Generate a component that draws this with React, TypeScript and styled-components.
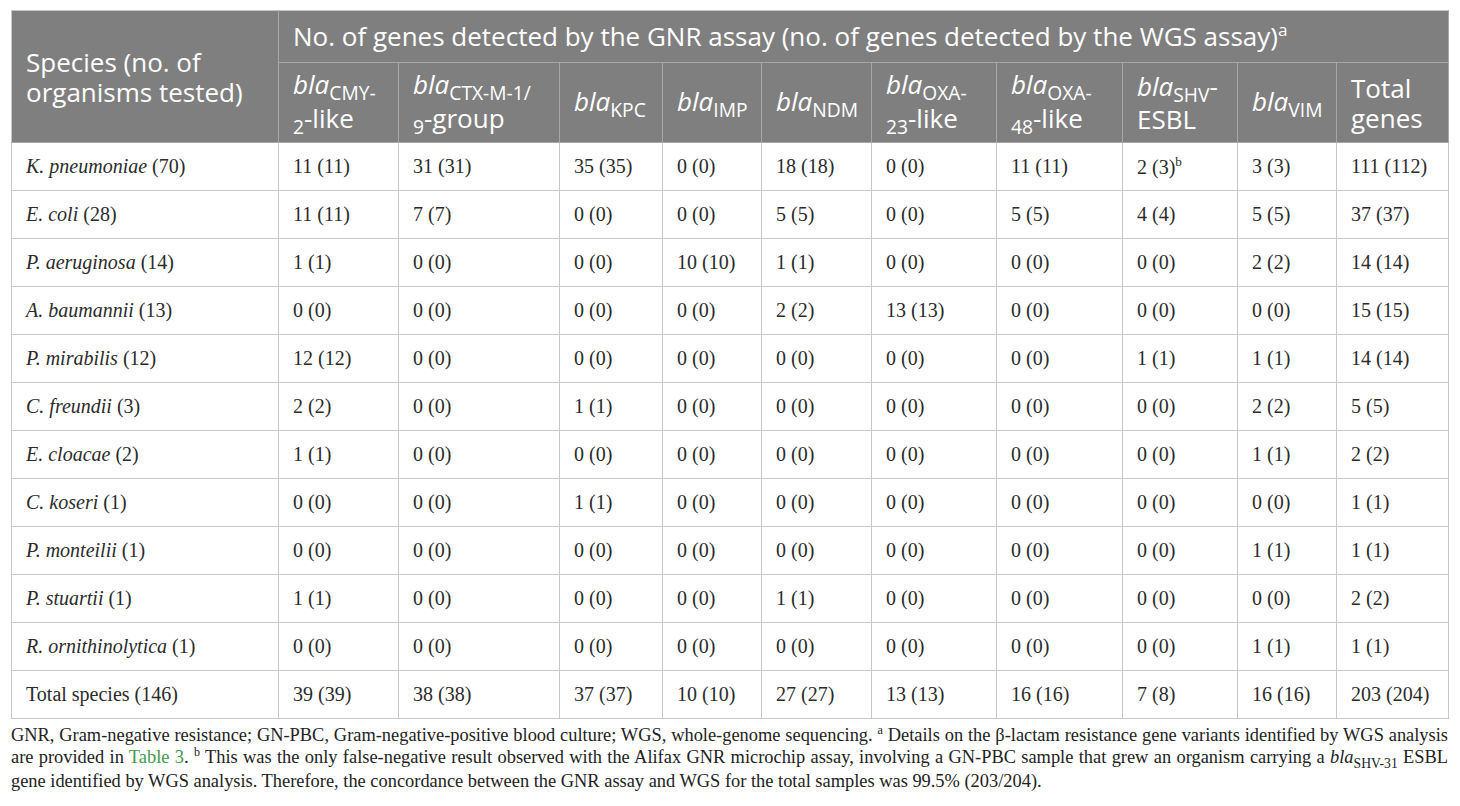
import { FC, ReactNode } from "react";
import styled, { createGlobalStyle } from "styled-components";

const GlobalStyle = createGlobalStyle`
  html, body {
    margin: 0;
    padding: 0;
    background: #ffffff;
  }
`;

const Page = styled.div`
  padding: 10px 12px 0 11px;
  width: 1437px;
`;

const Table = styled.table`
  width: 1437px;
  border-collapse: collapse;
  table-layout: fixed;
  border: 1px solid #c8c8c8;
`;

const HeadCell = styled.th<{ $first?: boolean }>`
  background: #7f7f7f;
  color: #ffffff;
  font-family: "Open Sans", "Noto Sans", sans-serif;
  font-weight: 400;
  font-size: 26px;
  line-height: 30px;
  text-align: left;
  vertical-align: middle;
  padding: 0 6px 0 14px;
  border: 1px solid #a8a8a8;
  border-top: none;
  white-space: nowrap;
  ${(p) => (p.$first ? "border-left: none;" : "")}
`;

const TopRow = styled.tr`
  height: 52px;
`;

const SubHeadRow = styled.tr`
  height: 80px;
`;

const BodyRow = styled.tr`
  height: 48px;
`;

const Cell = styled.td`
  font-family: "Liberation Serif", "Times New Roman", serif;
  font-size: 20px;
  color: #2b2b2b;
  padding: 0 8px 0 14px;
  border: 1px solid #c8c8c8;
  vertical-align: middle;
  white-space: nowrap;
`;

const Sub = styled.span`
  font-size: 0.74em;
  vertical-align: -0.32em;
  line-height: 1;
`;

const Sup = styled.sup`
  font-size: 0.66em;
  vertical-align: 0.6em;
  line-height: 1;
`;

const Note = styled.p`
  margin: 5px 0 0;
  font-family: "Liberation Serif", "Times New Roman", serif;
  font-size: 18.4px;
  line-height: 21px;
  color: #222222;
  text-align: justify;
`;

const Link = styled.span`
  color: #3f9a48;
`;

interface GeneProps {
  sub: ReactNode;
  tail?: ReactNode;
}

const Gene: FC<GeneProps> = ({ sub, tail }) => (
  <>
    <i>bla</i>
    <Sub>{sub}</Sub>
    {tail}
  </>
);

const colWidths = [267, 120, 161, 103, 99, 110, 125, 126, 115, 99, 112];

interface RowData {
  genus: string;
  count: number;
  values: ReactNode[];
}

const rows: RowData[] = [
  { genus: "K. pneumoniae", count: 70, values: ["11 (11)", "31 (31)", "35 (35)", "0 (0)", "18 (18)", "0 (0)", "11 (11)", <>2 (3)<Sup>b</Sup></>, "3 (3)", "111 (112)"] },
  { genus: "E. coli", count: 28, values: ["11 (11)", "7 (7)", "0 (0)", "0 (0)", "5 (5)", "0 (0)", "5 (5)", "4 (4)", "5 (5)", "37 (37)"] },
  { genus: "P. aeruginosa", count: 14, values: ["1 (1)", "0 (0)", "0 (0)", "10 (10)", "1 (1)", "0 (0)", "0 (0)", "0 (0)", "2 (2)", "14 (14)"] },
  { genus: "A. baumannii", count: 13, values: ["0 (0)", "0 (0)", "0 (0)", "0 (0)", "2 (2)", "13 (13)", "0 (0)", "0 (0)", "0 (0)", "15 (15)"] },
  { genus: "P. mirabilis", count: 12, values: ["12 (12)", "0 (0)", "0 (0)", "0 (0)", "0 (0)", "0 (0)", "0 (0)", "1 (1)", "1 (1)", "14 (14)"] },
  { genus: "C. freundii", count: 3, values: ["2 (2)", "0 (0)", "1 (1)", "0 (0)", "0 (0)", "0 (0)", "0 (0)", "0 (0)", "2 (2)", "5 (5)"] },
  { genus: "E. cloacae", count: 2, values: ["1 (1)", "0 (0)", "0 (0)", "0 (0)", "0 (0)", "0 (0)", "0 (0)", "0 (0)", "1 (1)", "2 (2)"] },
  { genus: "C. koseri", count: 1, values: ["0 (0)", "0 (0)", "1 (1)", "0 (0)", "0 (0)", "0 (0)", "0 (0)", "0 (0)", "0 (0)", "1 (1)"] },
  { genus: "P. monteilii", count: 1, values: ["0 (0)", "0 (0)", "0 (0)", "0 (0)", "0 (0)", "0 (0)", "0 (0)", "0 (0)", "1 (1)", "1 (1)"] },
  { genus: "P. stuartii", count: 1, values: ["1 (1)", "0 (0)", "0 (0)", "0 (0)", "1 (1)", "0 (0)", "0 (0)", "0 (0)", "0 (0)", "2 (2)"] },
  { genus: "R. ornithinolytica", count: 1, values: ["0 (0)", "0 (0)", "0 (0)", "0 (0)", "0 (0)", "0 (0)", "0 (0)", "0 (0)", "1 (1)", "1 (1)"] },
];

const totals = ["39 (39)", "38 (38)", "37 (37)", "10 (10)", "27 (27)", "13 (13)", "16 (16)", "7 (8)", "16 (16)", "203 (204)"];

const App: FC = () => {
  return (
    <Page>
      <GlobalStyle />
      <Table>
        <colgroup>
          {colWidths.map((w, i) => (
            <col key={i} style={{ width: w }} />
          ))}
        </colgroup>
        <thead>
          <TopRow>
            <HeadCell $first rowSpan={2}>
              Species (no. of
              <br />
              organisms tested)
            </HeadCell>
            <HeadCell colSpan={10}>
              No. of genes detected by the GNR assay (no. of genes detected by the WGS assay)
              <Sup>a</Sup>
            </HeadCell>
          </TopRow>
          <SubHeadRow>
            <HeadCell>
              <Gene sub={<>CMY-<br />2</>} tail="-like" />
            </HeadCell>
            <HeadCell>
              <Gene sub={<>CTX-M-1/<br />9</>} tail="-group" />
            </HeadCell>
            <HeadCell>
              <Gene sub="KPC" />
            </HeadCell>
            <HeadCell>
              <Gene sub="IMP" />
            </HeadCell>
            <HeadCell>
              <Gene sub="NDM" />
            </HeadCell>
            <HeadCell>
              <Gene sub={<>OXA-<br />23</>} tail="-like" />
            </HeadCell>
            <HeadCell>
              <Gene sub={<>OXA-<br />48</>} tail="-like" />
            </HeadCell>
            <HeadCell>
              <Gene sub="SHV" tail={<>-<br />ESBL</>} />
            </HeadCell>
            <HeadCell>
              <Gene sub="VIM" />
            </HeadCell>
            <HeadCell>
              Total
              <br />
              genes
            </HeadCell>
          </SubHeadRow>
        </thead>
        <tbody>
          {rows.map((row) => (
            <BodyRow key={row.genus}>
              <Cell>
                <i>{row.genus}</i> ({row.count})
              </Cell>
              {row.values.map((v, i) => (
                <Cell key={i}>{v}</Cell>
              ))}
            </BodyRow>
          ))}
          <BodyRow>
            <Cell>Total species (146)</Cell>
            {totals.map((v, i) => (
              <Cell key={i}>{v}</Cell>
            ))}
          </BodyRow>
        </tbody>
      </Table>
      <Note>
        GNR, Gram-negative resistance; GN-PBC, Gram-negative-positive blood culture; WGS,
        whole-genome sequencing. <Sup>a</Sup> Details on the β-lactam resistance gene variants
        identified by WGS analysis are provided in <Link>Table 3</Link>. <Sup>b</Sup> This was the
        only false-negative result observed with the Alifax GNR microchip assay, involving a
        GN-PBC sample that grew an organism carrying a <i>bla</i>
        <Sub>SHV-31</Sub> ESBL gene identified by WGS analysis. Therefore, the concordance between
        the GNR assay and WGS for the total samples was 99.5% (203/204).
      </Note>
    </Page>
  );
};

export default App;
